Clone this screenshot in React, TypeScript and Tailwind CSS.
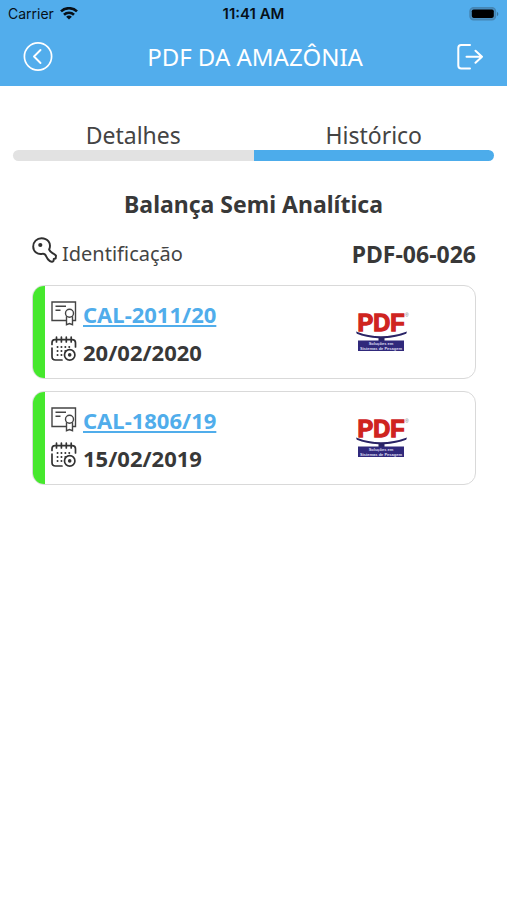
import React from "react";

type Certificate = { code: string; date: string };

const certificates: Certificate[] = [
  { code: "CAL-2011/20", date: "20/02/2020" },
  { code: "CAL-1806/19", date: "15/02/2019" },
];

function WifiIcon() {
  return (
    <svg viewBox="0 0 18 14" className="h-[14px] w-[18px]" fill="none" stroke="#071018" strokeWidth="2.6" aria-hidden="true">
      <path d="M1 4.400a11.600 11.600 0 0 1 16 0" />
      <path d="M4 7.800a7.200 7.200 0 0 1 10 0" />
      <path d="M9 12.600 6.100 9.800a4.200 4.200 0 0 1 5.800 0z" fill="#071018" stroke="none" />
    </svg>
  );
}

function BatteryIcon() {
  return (
    <svg viewBox="0 0 30 14" className="h-[14px] w-[30px]" aria-hidden="true">
      <rect x="1" y="0.7" width="25.5" height="12" rx="3.6" fill="#4b91c4" stroke="#4586b4" strokeWidth="1.5" />
      <rect x="2.8" y="2.5" width="22" height="8.4" rx="1.8" fill="#000" />
      <path d="M28 5v4c1.7-.5 1.7-3.5 0-4z" fill="#39749d" />
    </svg>
  );
}

function BackIcon() {
  return (
    <svg viewBox="0 0 30 30" className="size-[30px]" fill="none" stroke="currentColor" aria-hidden="true">
      <circle cx="15" cy="14.5" r="13.6" strokeWidth="1.7" />
      <path d="M17.5 8 11 14.5l6.500 6.500" strokeWidth="1.9" strokeLinecap="round" strokeLinejoin="round" />
    </svg>
  );
}

function ExitIcon() {
  return (
    <svg viewBox="0 0 26 26" className="size-[26px]" fill="none" stroke="currentColor" strokeWidth="2" strokeLinecap="round" strokeLinejoin="round" aria-hidden="true">
      <path d="M13 1H4.200Q1.300 1 1.300 3.900v17.600q0 2.900 2.900 2.900H13" />
      <path d="M9.500 12.700H25M18.500 6.700l6.500 6-6.500 6" />
    </svg>
  );
}

function KeyIcon() {
  return (
    <svg viewBox="0 0 26 26" className="size-[26px]" fill="none" stroke="#303030" strokeWidth="1.9" strokeLinecap="round" strokeLinejoin="round" aria-hidden="true">
      <path d="M17.1 12.5C20 6 15.200 1.200 9.500 1.200 4.800 1.200 1.200 5 1.200 9.500c0 5.200 4.500 8.500 9.300 7.300 2-.2 3 .8 3.700 2.500.8 2.100 2.200 3.600 3.800 4.900 1.600.9 3 .6 3.600-.5l.2-1.800 1.900-.4.3-2.900c-.8-1.100-2.200-1.700-3.500-2.500-1.700-1-2.700-2-3.400-3.600z" />
      <circle cx="8.3" cy="8" r="2.1" fill="#303030" stroke="none" />
    </svg>
  );
}

function CertificateIcon() {
  return (
    <svg viewBox="0 0 26 26" className="size-[26px] shrink-0" fill="none" stroke="#444" strokeWidth="1.4" aria-hidden="true">
      <path d="M15 20.500H1V2h23.500v18.500h-2.500" />
      <path d="M4.500 6.200H15M4.500 10.200h5" />
      <circle cx="18.500" cy="13.200" r="4" />
      <path d="M15.500 16.300v8.400l3-1.200 3 1.200v-8.400" />
    </svg>
  );
}

function CalendarIcon() {
  return (
    <svg viewBox="0 0 26 26" className="size-[26px] shrink-0" fill="none" stroke="#333" strokeWidth="1.7" strokeLinecap="round" aria-hidden="true">
      <path d="M11 24H4.500Q1 24 1 20.500V12M1 8.500V6.700Q1 3.700 4 3.700h17q3.500 0 3.500 3V11" />
      <path d="M5.500 1.200v4.800M10.400 1.200v4.800M15.300 1.200v4.800M20.200 1.200v4.800" />
      <path d="M6.500 11h14M6.500 15h7.800M6.500 19h4" strokeWidth="1.9" strokeDasharray="0.1 3.8" />
      <circle cx="18.700" cy="18.900" r="5.200" />
      <circle cx="18.700" cy="18.900" r="1.800" fill="#333" stroke="none" />
    </svg>
  );
}

function PdfLogo() {
  return (
    <svg viewBox="0 0 56 42" className="h-[42px] w-[56px] overflow-visible" role="img" aria-label="PDF Soluções em Sistemas de Pesagem">
      <path d="M1 20.500Q25.500 30 52 20.500l-.8 2.200Q41 26.600 29.500 27.200V30h-6v-2.800Q11 26.600 1.800 22.700z" fill="#292365" />
      <rect x="3" y="29.500" width="46" height="10.500" fill="#30297b" />
      <text x="2.5" y="20" fontSize="23.5" fontWeight="700" fill="#cf241f" stroke="#cf241f" strokeWidth="1.3" fontFamily="'Liberation Sans', Arial, sans-serif">PDF</text>
      <text x="50" y="6" fontSize="5" fill="#777" fontFamily="'Liberation Sans', Arial, sans-serif">®</text>
      <text x="26" y="34" textAnchor="middle" fontSize="4" fontWeight="700" fill="#dedcf2" fontFamily="'Liberation Sans', Arial, sans-serif">Soluções em</text>
      <text x="26" y="38.500" textAnchor="middle" fontSize="4" fontWeight="700" fill="#dedcf2" fontFamily="'Liberation Sans', Arial, sans-serif">Sistemas de Pesagem</text>
    </svg>
  );
}

function CertificateCard({ code, date }: Certificate) {
  return (
    <li className="flex overflow-hidden rounded-xl border border-[#d9d9d9] bg-white">
      <div className="w-3 shrink-0 bg-[#46e82d]" />
      <div className="flex flex-1 flex-col gap-[6px] pt-3 pb-[10px] pl-[6px]">
        <div className="flex items-start gap-[6px]">
          <div className="pt-[2px]"><CertificateIcon /></div>
          <a href="#certificado" className="text-[22px] leading-8 font-bold text-[#50adeb] underline decoration-2 underline-offset-2">{code}</a>
        </div>
        <div className="flex items-start gap-[6px]">
          <CalendarIcon />
          <time className="text-[22px] leading-8 font-bold text-[#383838]">{date}</time>
        </div>
      </div>
      <div className="flex w-[120px] items-center">
        <PdfLogo />
      </div>
    </li>
  );
}

export default function App() {
  return (
    <div className="min-h-screen bg-white font-['Noto_Sans','Open_Sans',sans-serif] text-[#444]">
      <header className="bg-[#52adec]">
        <div className="grid h-7 grid-cols-3 items-center px-2 font-['Inter','Liberation_Sans',sans-serif] text-sm text-[#071018]">
          <div className="flex items-center gap-[6px]">
            <span>Carrier</span>
            <WifiIcon />
          </div>
          <span className="text-center text-[15px] font-semibold">11:41 AM</span>
          <div className="flex justify-end">
            <BatteryIcon />
          </div>
        </div>
        <div className="flex h-[58px] items-center justify-between pr-6 pl-[23px] text-white">
          <button type="button" aria-label="Voltar"><BackIcon /></button>
          <h1 className="text-2xl">PDF DA AMAZÔNIA</h1>
          <button type="button" aria-label="Sair"><ExitIcon /></button>
        </div>
      </header>
      <main className="px-[13px] pt-[34px]">
        <div role="tablist" className="grid grid-cols-2">
          <button type="button" role="tab" aria-selected="false" className="text-[23px] leading-[30px]">
            Detalhes
            <span className="block h-[11px] rounded-l-full bg-[#e2e2e2]" />
          </button>
          <button type="button" role="tab" aria-selected="true" className="text-[23px] leading-[30px]">
            Histórico
            <span className="block h-[11px] rounded-r-full bg-[#4caceb]" />
          </button>
        </div>
        <h2 className="mt-7 text-center text-[23px] leading-[30px] font-bold text-[#383838]">Balança Semi Analítica</h2>
        <div className="pr-[18px] pl-[19px]">
          <div className="mt-[18px] flex items-start justify-between">
            <div className="flex items-start gap-1">
              <KeyIcon />
              <span className="text-xl leading-[34px]">Identificação</span>
            </div>
            <strong className="text-[23px] leading-[34px] text-[#383838]">PDF-06-026</strong>
          </div>
          <ul className="mt-[14px] flex flex-col gap-3">
            {certificates.map((item) => (
              <CertificateCard key={item.code} {...item} />
            ))}
          </ul>
        </div>
      </main>
    </div>
  );
}
